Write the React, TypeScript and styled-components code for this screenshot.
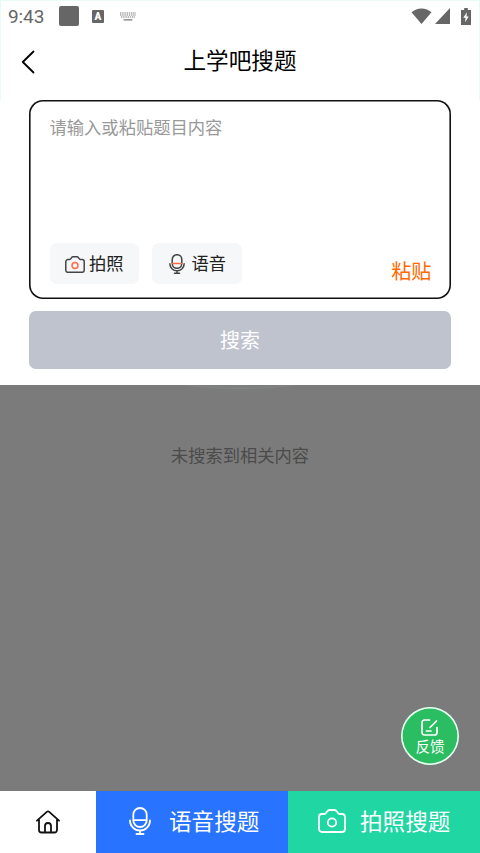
import React from "react";
import styled, { createGlobalStyle } from "styled-components";

const GlobalStyle = createGlobalStyle`
  * { box-sizing: border-box; }
  body { margin: 0; background: #fff; }
  button { border: 0; padding: 0; margin: 0; background: none; font: inherit; color: inherit; }
`;

const Screen = styled.div`
  position: relative;
  width: 480px;
  height: 853px;
  display: flex;
  flex-direction: column;
  overflow: hidden;
  background: #fff;
  font-family: "Noto Sans CJK SC", sans-serif;
`;

const TopArea = styled.div`
  height: 100px;
  flex: none;
  border: solid #e9fbf7;
  border-width: 1px 1px 0;
`;

const StatusBar = styled.div`
  height: 31px;
  padding: 0 8px 0 7px;
  display: flex;
  align-items: center;
  color: #666;
`;

const Clock = styled.span`
  width: 51px;
  font: 400 19px/31px Roboto, sans-serif;
  letter-spacing: -0.1px;
`;

const Notice = styled.div`
  width: 20px;
  height: 20px;
  margin-top: -1px;
  border-radius: 2px;
  background: #666;
`;

const LetterBadge = styled.div`
  width: 12px;
  height: 13px;
  margin-left: 13px;
  margin-top: -1px;
  border-radius: 1px;
  background: #666;
  color: #fff;
  font: 900 10px/13px Roboto, sans-serif;
  text-align: center;
`;

const Glyph = styled.svg<{ $left?: number; $top?: number }>`
  display: block;
  flex: none;
  margin-left: ${(p) => p.$left ?? 0}px;
  margin-top: ${(p) => p.$top ?? 0}px;
  fill: none;
  stroke-linecap: round;
  stroke-linejoin: round;
`;

const Signals = styled.div`
  margin-left: auto;
  margin-top: -1px;
  display: flex;
  align-items: center;
`;

const Header = styled.header`
  height: 60px;
  display: grid;
  grid-template-columns: 60px 1fr 60px;
  align-items: center;
`;

const Title = styled.h1`
  margin: -4px 0 0;
  font-size: 22.6px;
  line-height: 32px;
  font-weight: 400;
  color: #000;
  text-align: center;
`;

const InputCard = styled.section`
  flex: none;
  width: 422.5px;
  height: 198.5px;
  margin: 0 auto;
  padding: 14px 20px 14.5px 20.75px;
  box-shadow: inset 0 0 0 1.6px #111;
  border-radius: 14px;
  display: flex;
  flex-direction: column;
  justify-content: space-between;
`;

const Placeholder = styled.p`
  margin: 0;
  font-size: 17.3px;
  line-height: 26px;
  color: #999;
`;

const Actions = styled.div`
  display: flex;
  gap: 13px;
`;

const Chip = styled.button`
  width: 89.5px;
  height: 41px;
  border-radius: 7px;
  background: #f5f7f9;
  display: flex;
  align-items: center;
  justify-content: center;
  color: #222;
  font-size: 17.3px;
  line-height: 26px;
`;

const Paste = styled.button`
  margin: 15px 0 0 auto;
  color: #ff6900;
  font-size: 20px;
  line-height: 26px;
`;

const SearchButton = styled.button`
  flex: none;
  && {
    width: 422.5px;
    height: 58px;
    margin: 12.5px auto 16px;
    padding-bottom: 2px;
    border-radius: 7px;
    background: #bfc3cd;
    color: #fff;
    font-size: 20px;
  }
`;

const Results = styled.main`
  position: relative;
  flex: none;
  height: 405.5px;
  padding-top: 57px;
  overflow: hidden;
  background: #7b7b7b;
  text-align: center;
`;

const Arc = styled.div`
  position: absolute;
  top: -16px;
  left: 170px;
  width: 140px;
  height: 20px;
  border-radius: 50%;
  background: #7d7e7e;
  border-bottom: 1px solid #838484;
`;

const Empty = styled.p`
  margin: 0;
  color: #4b4b4b;
  font-size: 17.3px;
  line-height: 26px;
`;

const Feedback = styled.button`
  position: absolute;
  left: 401px;
  top: 707px;
  width: 58px;
  height: 58px;
  && {
    border-radius: 50%;
    box-shadow: inset 0 0 0 1.6px #f2fff6;
    background: #2abd62;
    color: #fff;
    font-size: 14.6px;
    line-height: 20px;
  }
  display: flex;
  flex-direction: column;
  align-items: center;
`;

const BottomBar = styled.nav`
  flex: 1;
  display: grid;
  grid-template-columns: 96px 192px 192px;
`;

const Tab = styled.button<{ $tone: string }>`
  && {
    background: ${(p) => p.$tone};
    color: #fff;
    font-size: 22.6px;
    line-height: 32px;
  }
  display: flex;
  align-items: center;
`;

const Label = styled.span<{ $gap: number }>`
  margin-left: ${(p) => p.$gap}px;
  margin-top: -1px;
`;

type IconProps = { width: number; height: number; color: string; accent: string; line: number; left?: number; top?: number };

const Camera = ({ width, height, color, accent, line, left, top }: IconProps) => (
  <Glyph width={width} height={height} viewBox="0 0 28 24" $left={left} $top={top} stroke={color} strokeWidth={line}>
    <path d="M4 5h2.5C8.6 5 8.8 1 11.2 1h5.6c2.4 0 2.6 4 4.7 4H24a3 3 0 0 1 3 3v12a3 3 0 0 1-3 3H4a3 3 0 0 1-3-3V8a3 3 0 0 1 3-3Z" />
    <circle cx="14" cy="13.5" r="4.2" stroke={accent} />
  </Glyph>
);

const Mic = ({ width, height, color, accent, line, left, top }: IconProps) => (
  <Glyph width={width} height={height} viewBox="0 0 22 28" $left={left} $top={top} stroke={color} strokeWidth={line}>
    <rect x="4.3" y="1" width="13.4" height="19" rx="6.7" />
    <path d="M4.8 13.2h12.4" stroke={accent} />
    <path d="M1 13.5a10 10 0 0 0 20 0M11 23.5V27M7.5 27h7" />
  </Glyph>
);

export default function App() {
  return (
    <>
      <GlobalStyle />
      <Screen>
        <TopArea>
          <StatusBar>
            <Clock>9:43</Clock>
            <Notice />
            <LetterBadge>A</LetterBadge>
            <Glyph width="16" height="9" viewBox="0 0 16 9" $left={16} $top={-1} stroke="#777">
              <path d="M0 1h16M0 3h16M1 5h14" strokeWidth="1.2" strokeDasharray="1.4 .8" strokeLinecap="butt" />
              <path d="M4 7.8h8" strokeWidth="1.2" />
            </Glyph>
            <Signals>
              <Glyph width="21" height="16" viewBox="0 0 21 16">
                <path d="M.5 4.2C6-.9 15-.9 20.5 4.2L10.5 16Z" fill="#666" />
              </Glyph>
              <Glyph width="15" height="16" viewBox="0 0 15 16" $left={3.5}>
                <path d="M15 0v16H0Z" fill="#666" />
              </Glyph>
              <Glyph width="10" height="17" viewBox="0 0 11 18" preserveAspectRatio="none" $left={11}>
                <path d="M3.5 0h4v2H11v16H0V2h3.5Z" fill="#666" />
                <path d="M6.5 4.5 2.5 10.3H5L4.5 15l4-6H6Z" fill="#fff" />
              </Glyph>
            </Signals>
          </StatusBar>
          <Header>
            <Glyph width="14" height="24" viewBox="0 0 14 24" $left={20} $top={-1} stroke="#000" strokeWidth="1.8">
              <path d="M12.5 1.5 1.8 12l10.7 10.5" />
            </Glyph>
            <Title>上学吧搜题</Title>
          </Header>
        </TopArea>

        <InputCard>
          <Placeholder>请输入或粘贴题目内容</Placeholder>
          <Actions>
            <Chip>
              <Camera width={20} height={17} color="#444" accent="#ff6b4a" line={2.1} top={1} />
              <Label $gap={4}>拍照</Label>
            </Chip>
            <Chip>
              <Mic width={16} height={20} color="#444" accent="#ff6b4a" line={2.1} left={2} />
              <Label $gap={6}>语音</Label>
            </Chip>
            <Paste>粘贴</Paste>
          </Actions>
        </InputCard>
        <SearchButton>搜索</SearchButton>

        <Results>
          <Arc />
          <Empty>未搜索到相关内容</Empty>
        </Results>

        <BottomBar>
          <Tab $tone="#fff" aria-label="首页">
            <Glyph width="24" height="24" viewBox="0 0 24 24" $left={36} stroke="#111" strokeWidth="1.8">
              <path d="M1 10.7 10.8 1.9q1.2-1 2.4 0L23 10.7M3 9.5V20a2.500 2.500 0 0 0 2.500 2.500h13A2.500 2.500 0 0 0 21 20V9.500M9 22v-6a3 3 0 0 1 6 0v6" />
            </Glyph>
          </Tab>
          <Tab $tone="#2873ff">
            <Mic width={22} height={28} color="#fff" accent="#fff" line={1.8} left={33} top={-1} />
            <Label $gap={18}>语音搜题</Label>
          </Tab>
          <Tab $tone="#20d6a3">
            <Camera width={28} height={24} color="#fff" accent="#fff" line={1.8} left={30} top={-1} />
            <Label $gap={14}>拍照搜题</Label>
          </Tab>
        </BottomBar>

        <Feedback>
          <Glyph width="17" height="17" viewBox="0 0 17 17" $left={-1} $top={12} stroke="#fff" strokeWidth="1.7">
            <path d="M8.5 1h-5A2.5 2.5 0 0 0 1 3.5v10A2.5 2.5 0 0 0 3.5 16h10a2.5 2.5 0 0 0 2.5-2.5v-5M9 8.5 15.500 2M5.500 12H10" />
          </Glyph>
          反馈
        </Feedback>
      </Screen>
    </>
  );
}
